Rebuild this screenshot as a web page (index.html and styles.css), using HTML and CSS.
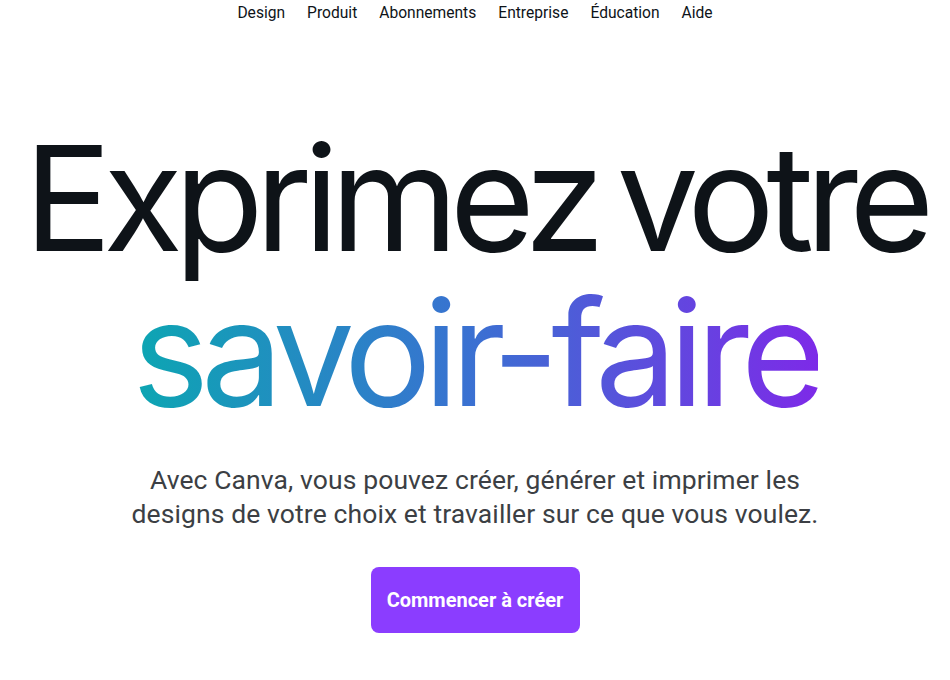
FILE: index.html
```html
<!DOCTYPE html>
<html lang="fr">
<head>
<meta charset="utf-8">
<title>Canva</title>
<link rel="stylesheet" href="styles.css">
</head>
<body>
<header class="topnav">
  <nav class="nav">
    <a class="nav-link" href="#">Design</a>
    <a class="nav-link" href="#">Produit</a>
    <a class="nav-link" href="#">Abonnements</a>
    <a class="nav-link" href="#">Entreprise</a>
    <a class="nav-link" href="#">Éducation</a>
    <a class="nav-link" href="#">Aide</a>
  </nav>
</header>
<main class="hero">
  <h1 class="title">
    <span class="title-line first">Exprimez votre</span>
    <span class="title-line gradient">savoir-faire</span>
  </h1>
  <p class="lead">Avec Canva, vous pouvez créer, générer et imprimer les<br>designs de votre choix et travailler sur ce que vous voulez.</p>
  <a class="cta" href="#">Commencer à créer</a>
</main>
</body>
</html>
```
FILE: styles.css
```css
html, body {
  margin: 0;
  padding: 0;
  background: #ffffff;
}
body {
  font-family: "Inter", "Noto Sans", sans-serif;
  color: #0e1318;
  width: 950px;
  height: 680px;
  overflow: hidden;
}
.topnav {
  display: flex;
  justify-content: center;
  padding-top: 3px;
}
.nav {
  display: flex;
  gap: 22px;
}
.nav-link {
  font-family: "Roboto", "Noto Sans", sans-serif;
  font-size: 15.6px;
  line-height: 20px;
  color: #0e1318;
  text-decoration: none;
}
.hero {
  display: flex;
  flex-direction: column;
  align-items: center;
}
.title {
  margin: 98px 0 0;
  font-family: "Inter", sans-serif;
  font-weight: 400;
  font-size: 146px;
  line-height: 155px;
  letter-spacing: -8px;
  word-spacing: -8px;
  text-align: center;
  display: flex;
  flex-direction: column;
  align-items: center;
}
.title-line {
  display: block;
  white-space: nowrap;
}
.first {
  letter-spacing: -8.6px;
  word-spacing: -12px;
}
.gradient {
  background: linear-gradient(90deg, #0ca6b2 0%, #3b70d2 50%, #7d2ae8 100%);
  -webkit-background-clip: text;
  background-clip: text;
  color: transparent;
}
.lead {
  margin: 32px 0 0;
  font-family: "Roboto", sans-serif;
  font-size: 26.5px;
  line-height: 34px;
  letter-spacing: 0.1px;
  color: #3c3f44;
  text-align: center;
}
.cta {
  margin-top: 36px;
  width: 209px;
  height: 66px;
  display: flex;
  align-items: center;
  justify-content: center;
  background: #8b3dff;
  border-radius: 8px;
  color: #ffffff;
  font-family: "Roboto", sans-serif;
  font-weight: 700;
  font-size: 20px;
  text-decoration: none;
}
```
